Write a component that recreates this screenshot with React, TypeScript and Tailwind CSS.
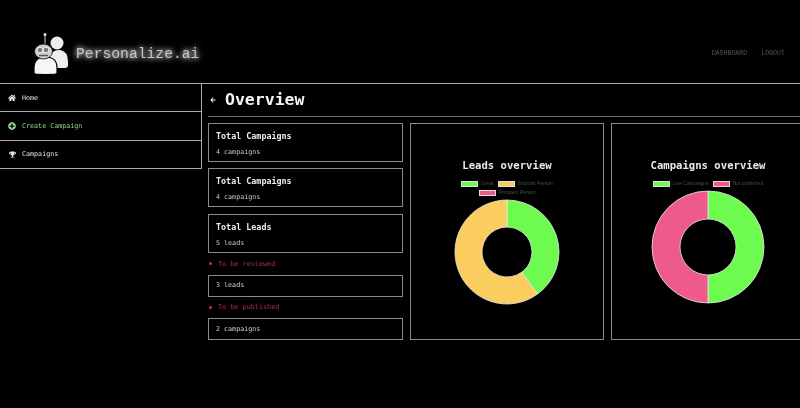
import React from 'react';
import { FaArrowLeft, FaHome, FaPlusCircle, FaTrophy } from 'react-icons/fa';

const mono = "font-['DejaVu_Sans_Mono','Liberation_Mono',monospace]";

const Logo = () => (
  <svg width="36" height="42" viewBox="0 0 36 42" className="shrink-0">
    <circle cx="24" cy="10" r="6.5" fill="#eeeeee" />
    <path d="M16 24 q4 -8 11 -7 q8 1 8 12 v3 q0 3 -3 3 h-8 z" fill="#eeeeee" />
    <path d="M1 40 v-5 q0 -11 11.5 -11 q11.5 0 11.5 11 v5 q0 1.5 -11.5 1.5 q-11.5 0 -11.5 -1.5 z" fill="#f6f6f6" stroke="#000" strokeWidth="1.2" />
    <rect x="11.4" y="1" width="1.2" height="10" fill="#aaaaaa" />
    <circle cx="12" cy="1.5" r="1.5" fill="#dddddd" />
    <ellipse cx="10.5" cy="18.5" rx="9" ry="7.5" fill="#cfcfcf" stroke="#000" strokeWidth="0.8" />
    <circle cx="7" cy="17" r="2.8" fill="#777777" stroke="#eeeeee" strokeWidth="1" />
    <circle cx="13" cy="17" r="2.8" fill="#777777" stroke="#eeeeee" strokeWidth="1" />
    <path d="M6 22.5 h9" stroke="#555555" strokeWidth="1.5" />
  </svg>
);

const NavItem = ({ icon, label, active }: { icon: React.ReactNode; label: string; active?: boolean }) => (
  <div className={`flex h-[28.33px] items-center gap-[6px] border-b border-[#a8a8a8] pl-[8px] text-[6.7px] ${active ? 'text-[#8fd98f]' : 'text-[#e0e0e0]'}`}>
    <span className="flex w-[8px] justify-center">{icon}</span>
    {label}
  </div>
);

const StatCard = ({ title, value }: { title: string; value: string }) => (
  <div className="flex h-[39px] flex-col justify-center gap-[9px] border border-[#8c8c8c] px-[7px] pt-[3px]">
    <div className="text-[8.4px] leading-none font-bold text-[#ececec]">{title}</div>
    <div className="text-[6.7px] leading-none text-[#c8c8c8]">{value}</div>
  </div>
);

const Status = ({ label }: { label: string }) => (
  <div className="flex h-[21.5px] items-center gap-[6px] pl-[1px] text-[6.8px] text-[#b02a58]">
    <span className="h-[3px] w-[3px] rounded-full bg-[#d0285f]" />
    {label}
  </div>
);

const SmallCard = ({ value }: { value: string }) => (
  <div className="flex h-[22px] items-center border border-[#8c8c8c] px-[7px] text-[6.7px] text-[#d0d0d0]">{value}</div>
);

const Legend = ({ color, label }: { color: string; label: string }) => (
  <div className="flex items-center gap-[3px]">
    <span className="h-[6px] w-[17px] border border-[#ddd]" style={{ backgroundColor: color }} />
    <span className="font-['Liberation_Sans',sans-serif] text-[5px] leading-none text-[#4a4a4a]">{label}</span>
  </div>
);

const Donut = ({ size, inner, parts }: { size: number; inner: number; parts: { color: string; value: number }[] }) => {
  const outer = size / 2;
  const total = parts.reduce((sum, p) => sum + p.value, 0);
  let angle = 0;
  const pt = (r: number, a: number) => `${outer + r * Math.sin(a)} ${outer - r * Math.cos(a)}`;
  return (
    <svg width={size + 2} height={size + 2} viewBox={`-1 -1 ${size + 2} ${size + 2}`}>
      {parts.map((p) => {
        const start = angle;
        angle += (p.value / total) * Math.PI * 2;
        const large = angle - start > Math.PI ? 1 : 0;
        const d = `M${pt(outer, start)} A${outer} ${outer} 0 ${large} 1 ${pt(outer, angle)} L${pt(inner, angle)} A${inner} ${inner} 0 ${large} 0 ${pt(inner, start)} Z`;
        return <path key={p.color} d={d} fill={p.color} stroke="#e8e8e8" strokeWidth="0.8" />;
      })}
    </svg>
  );
};

const GREEN = '#6cfb4e';
const YELLOW = '#fbcd5e';
const PINK = '#ee5a8a';

export default function App() {
  return (
    <div className={`h-[408px] w-[800px] overflow-hidden bg-black blur-[0.35px] ${mono}`}>
      <header className="flex h-[84px] items-center justify-between border-b border-[#a8a8a8] pt-[25px] pr-[15px] pl-[33px]">
        <div className="flex items-center gap-[7px]">
          <Logo />
          <span className="font-['Liberation_Mono',monospace] text-[14.7px] text-[#c4c4c4] [text-shadow:0_0_5px_#ffffff,0_0_9px_#999999]">Personalize.ai</span>
        </div>
        <nav className="flex gap-[14px] font-['Liberation_Mono',monospace] text-[6.6px] text-[#555555]">
          <span>DASHBOARD</span>
          <span>LOGOUT</span>
        </nav>
      </header>
      <div className="flex">
        <aside className="h-[85px] w-[202px] shrink-0 border-r border-[#a8a8a8]">
          <NavItem label="Home" icon={<FaHome size={8} color="#e8e8e8" />} />
          <NavItem label="Create Campaign" active icon={<FaPlusCircle size={8} color="#8fd98f" />} />
          <NavItem label="Campaigns" icon={<FaTrophy size={7} color="#e8e8e8" />} />
        </aside>
        <main className="min-w-0 flex-1 pl-[6px]">
          <div className="flex h-[33px] items-center gap-[9px] border-b border-[#6e6e6e] pl-[2px] text-[#f4f4f4]">
            <FaArrowLeft size={6} />
            <h1 className="text-[16.5px] leading-none font-bold">Overview</h1>
          </div>
          <div className="mt-[6px] flex gap-[7px]">
            <div className="flex w-[195px] shrink-0 flex-col">
              <StatCard title="Total Campaigns" value="4 campaigns" />
              <div className="mt-[6px]"><StatCard title="Total Campaigns" value="4 campaigns" /></div>
              <div className="mt-[7px]"><StatCard title="Total Leads" value="5 leads" /></div>
              <Status label="To be reviewed" />
              <SmallCard value="3 leads" />
              <Status label="To be published" />
              <SmallCard value="2 campaigns" />
            </div>
            <section className="flex h-[217px] w-[194px] shrink-0 flex-col items-center border border-[#8c8c8c] pt-[36px]">
              <h2 className="text-[10.6px] leading-none font-bold text-[#e8e8e8]">Leads overview</h2>
              <div className="mt-[10px] flex w-[100px] flex-wrap justify-center gap-x-[4px] gap-y-[3px]">
                <Legend color={GREEN} label="Great" />
                <Legend color={YELLOW} label="Shortlist Person" />
                <Legend color={PINK} label="Prospect Person" />
              </div>
              <div className="mt-[3px]">
                <Donut size={104} inner={25} parts={[{ color: GREEN, value: 2 }, { color: YELLOW, value: 3 }]} />
              </div>
            </section>
            <section className="flex h-[217px] w-[194px] shrink-0 flex-col items-center border border-[#8c8c8c] pt-[36px]">
              <h2 className="text-[10.6px] leading-none font-bold text-[#e8e8e8]">Campaigns overview</h2>
              <div className="mt-[10px] flex justify-center gap-[4px]">
                <Legend color={GREEN} label="Live Campaigns" />
                <Legend color={PINK} label="Not published" />
              </div>
              <div className="mt-[3px]">
                <Donut size={112} inner={28} parts={[{ color: GREEN, value: 1 }, { color: PINK, value: 1 }]} />
              </div>
            </section>
          </div>
        </main>
      </div>
    </div>
  );
}
